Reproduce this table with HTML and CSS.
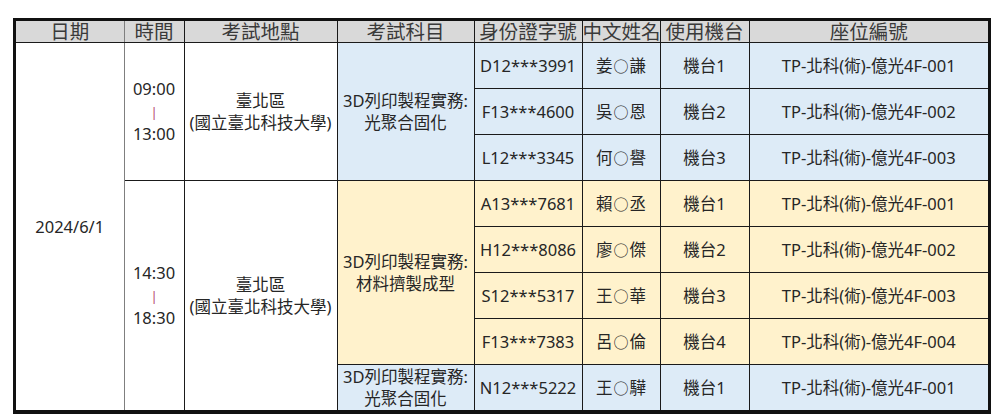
FILE: index.html
```html
<!DOCTYPE html>
<html lang="zh-Hant">
<head>
<meta charset="utf-8">
<title>考試座位表</title>
<link rel="stylesheet" href="styles.css">
</head>
<body>
<div class="frame">
<table class="sched">
<colgroup>
<col class="c-date"><col class="c-time"><col class="c-loc"><col class="c-subj"><col class="c-id"><col class="c-name"><col class="c-mach"><col class="c-seat">
</colgroup>
<thead>
<tr class="head">
<th class="g-r">日期</th><th>時間</th><th>考試地點</th><th class="g-l">考試科目</th><th>身份證字號</th><th>中文姓名</th><th>使用機台</th><th>座位編號</th>
</tr>
</thead>
<tbody>
<tr>
<td rowspan="8" class="date g-r">2024/6/1</td>
<td rowspan="3" class="time">09:00<br><span class="bar">|</span><br>13:00</td>
<td rowspan="3" class="loc">臺北區<br>(國立臺北科技大學)</td>
<td rowspan="3" class="subj blue g-l">3D列印製程實務:<br>光聚合固化</td>
<td class="blue">D12***3991</td><td class="blue">姜<span class="mask">○</span>謙</td><td class="blue">機台1</td><td class="blue">TP-北科(術)-億光4F-001</td>
</tr>
<tr class="inner">
<td class="blue">F13***4600</td><td class="blue">吳<span class="mask">○</span>恩</td><td class="blue">機台2</td><td class="blue">TP-北科(術)-億光4F-002</td>
</tr>
<tr class="inner">
<td class="blue">L12***3345</td><td class="blue">何<span class="mask">○</span>譽</td><td class="blue">機台3</td><td class="blue">TP-北科(術)-億光4F-003</td>
</tr>
<tr class="group">
<td rowspan="5" class="time">14:30<br><span class="bar">|</span><br>18:30</td>
<td rowspan="5" class="loc">臺北區<br>(國立臺北科技大學)</td>
<td rowspan="4" class="subj yellow g-l">3D列印製程實務:<br>材料擠製成型</td>
<td class="yellow">A13***7681</td><td class="yellow">賴<span class="mask">○</span>丞</td><td class="yellow">機台1</td><td class="yellow">TP-北科(術)-億光4F-001</td>
</tr>
<tr class="inner">
<td class="yellow">H12***8086</td><td class="yellow">廖<span class="mask">○</span>傑</td><td class="yellow">機台2</td><td class="yellow">TP-北科(術)-億光4F-002</td>
</tr>
<tr class="inner">
<td class="yellow">S12***5317</td><td class="yellow">王<span class="mask">○</span>華</td><td class="yellow">機台3</td><td class="yellow">TP-北科(術)-億光4F-003</td>
</tr>
<tr class="inner">
<td class="yellow">F13***7383</td><td class="yellow">呂<span class="mask">○</span>倫</td><td class="yellow">機台4</td><td class="yellow">TP-北科(術)-億光4F-004</td>
</tr>
<tr class="last">
<td class="subj blue g-l">3D列印製程實務:<br>光聚合固化</td>
<td class="blue">N12***5222</td><td class="blue">王<span class="mask">○</span>驊</td><td class="blue">機台1</td><td class="blue">TP-北科(術)-億光4F-001</td>
</tr>
</tbody>
</table>
</div>
</body>
</html>
```

FILE: styles.css
```css
html, body {
  margin: 0;
  padding: 0;
  background: #ffffff;
}
body {
  padding: 18px 0 0 13px;
  font-family: "Noto Sans", "Noto Sans CJK TC", sans-serif;
  color: #262626;
}
.frame {
  width: 972px;
  border: 3px solid #111111;
  border-bottom-width: 4px;
}
.sched {
  width: 972px;
  border-collapse: collapse;
  table-layout: fixed;
  border-style: hidden;
}
.c-date { width: 108px; }
.c-time { width: 60px; }
.c-loc { width: 153px; }
.c-subj { width: 137px; }
.c-id { width: 108px; }
.c-name { width: 78px; }
.c-mach { width: 89px; }
.c-seat { width: 239px; }

.sched th,
.sched td {
  border: 1px solid #1a1a1a;
  padding: 0;
  text-align: center;
  vertical-align: middle;
  white-space: nowrap;
}
.head th {
  height: 20px;
  background: #d9d9d9;
  font-family: "Noto Sans CJK TC", sans-serif;
  font-weight: 400;
  font-size: 19.5px;
  line-height: 19px;
  color: #3a3a3a;
  vertical-align: top;
  padding-bottom: 1px;
}
.sched td {
  height: 45px;
  font-size: 16.5px;
  line-height: 22px;
}
.sched .g-r { border-right-color: #7f7f7f; }
.sched .g-l { border-left-color: #7f7f7f; }
.inner td.blue,
.inner td.yellow { border-top-color: #8c8c8c; }
.blue { background: #ddebf7; }
.yellow { background: #fff2cc; }
.date { background: #ffffff; }
.bar {
  color: #b5446e;
  font-size: 13px;
}
.mask {
  display: inline-block;
  width: 17px;
  font-size: 15px;
  vertical-align: 0;
}
```
